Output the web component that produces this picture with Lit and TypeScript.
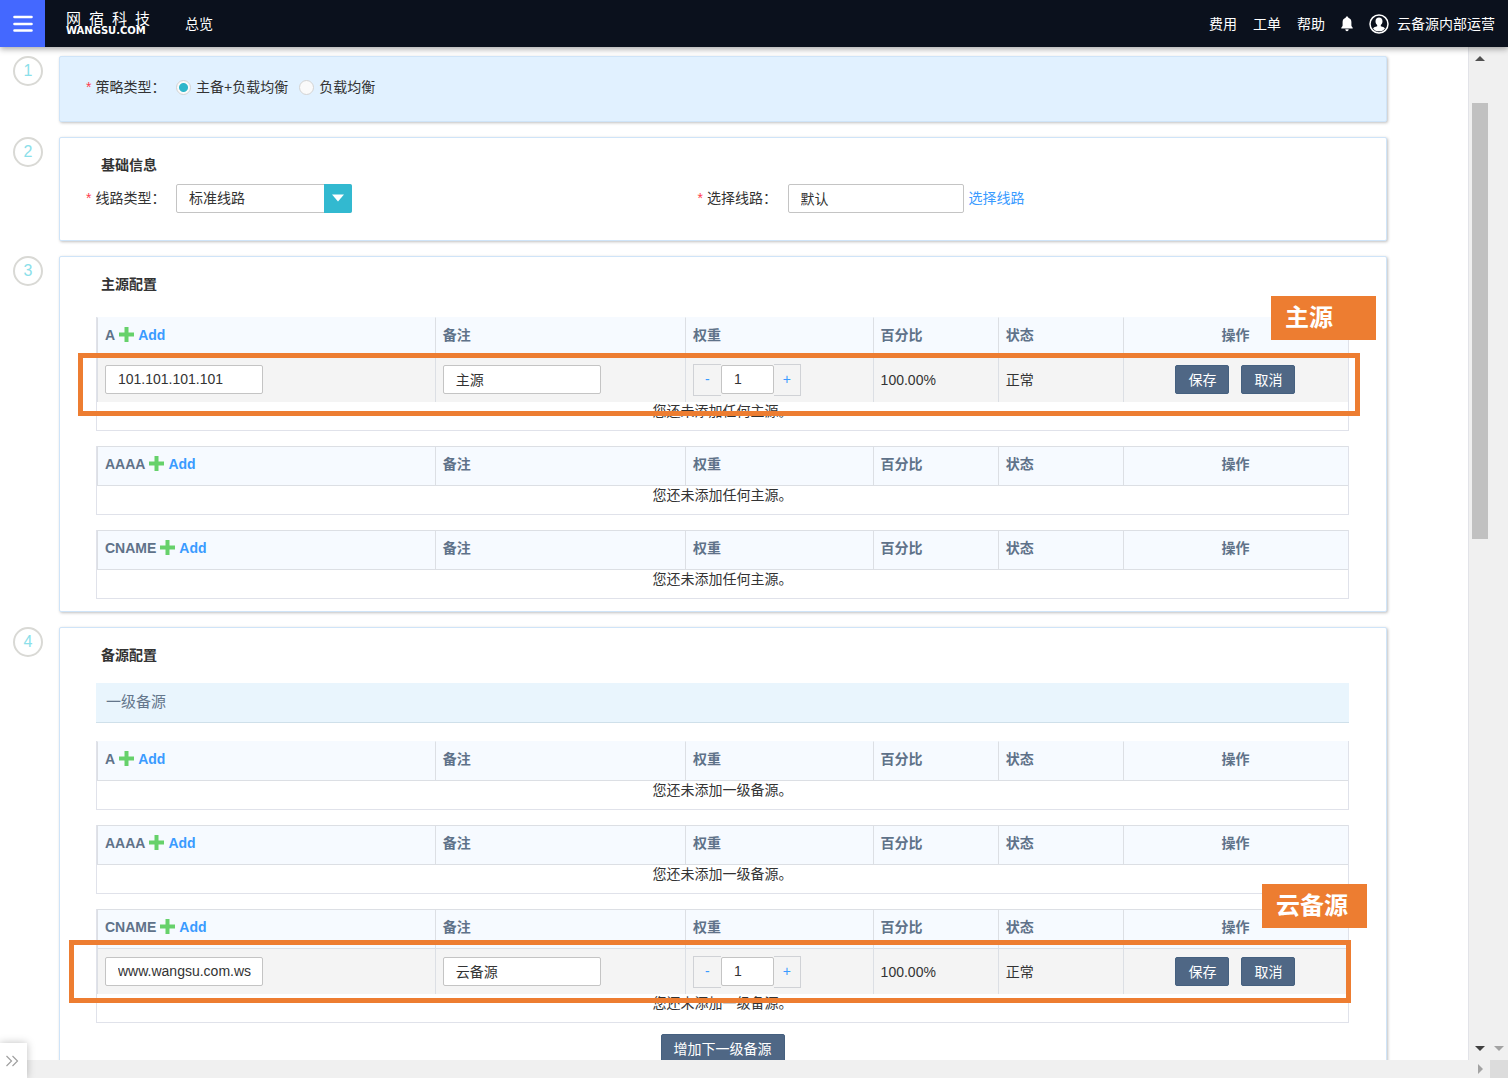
import { LitElement, html, css, svg, nothing } from "lit";
import { customElement, property } from "lit/decorators.js";
import { classMap } from "lit/directives/class-map.js";

interface Source {
  address: string;
  remark: string;
  weight: number;
  percent: string;
  status: string;
}

const controls = css`
  *,
  *::before,
  *::after {
    box-sizing: border-box;
  }
  button,
  input,
  select {
    font: inherit;
    color: inherit;
    margin: 0;
  }
  button {
    cursor: pointer;
  }
  .text-input {
    height: 29px;
    padding: 0 11px 1px 12px;
    border: 1px solid #c4c4c4;
    border-radius: 2px;
    background: #fff;
    color: #333;
    outline: none;
  }
  .solid-button {
    height: 29px;
    padding: 0 12px;
    border: 1px solid #45607f;
    border-radius: 2px;
    background: #4f6785;
    color: #fff;
    line-height: 20px;
  }
`;

@customElement("source-table")
export class SourceTable extends LitElement {
  @property() kind = "";
  @property() empty = "";
  @property({ attribute: false }) source?: Source;
  @property({ type: Boolean }) open = false;

  static styles = [
    controls,
    css`
      :host {
        display: block;
      }
      .table {
        width: 100%;
        table-layout: fixed;
        border-collapse: separate;
        border-spacing: 0;
        border: 1px solid #e0e2ea;
        border-top: 0;
      }
      th,
      td {
        padding: 0 8px 0 7px;
        text-align: left;
        border-left: 1px solid #dcdfe4;
      }
      th {
        height: 40px;
        padding-bottom: 5px;
        background: #f6faff;
        border-top: 1px solid #dcdfe4;
        border-bottom: 1px solid #dcdfe4;
        color: #5f7289;
        font-weight: 600;
      }
      .open th {
        border-top-color: #f6faff;
      }
      .w27 {
        width: 27%;
      }
      .w20 {
        width: 20%;
      }
      .w15 {
        width: 15%;
      }
      .w10 {
        width: 10%;
      }
      .w18 {
        width: 18%;
      }
      .actions {
        text-align: center;
      }
      .kind {
        display: flex;
        align-items: center;
        gap: 4px;
      }
      .add {
        display: flex;
        align-items: center;
        gap: 4px;
        padding: 0;
        border: 0;
        background: none;
        color: #3a9bff;
        font-weight: 700;
      }
      .edit td {
        height: 45px;
        background: #f4f4f4;
      }
      .field {
        display: block;
        width: 158px;
        max-width: 100%;
      }
      .stepper {
        display: flex;
        align-items: center;
      }
      .step {
        width: 28px;
        height: 32px;
        padding: 0 0 2px;
        border: 1px solid #d0d2d6;
        background: #f4f4f4;
        color: #3a9bff;
      }
      .minus {
        border-right: 0;
      }
      .plus {
        width: 27px;
        border-left: 0;
      }
      .weight {
        width: 53px;
      }
      .buttons {
        display: flex;
        justify-content: center;
        gap: 12px;
      }
      .empty td {
        height: 28px;
        padding: 0;
        border-left: 0;
        text-align: center;
        vertical-align: top;
        line-height: 19px;
      }
    `,
  ];

  private editRow(s: Source) {
    return html`<tr class="edit">
      <td>
        <input class="text-input field" aria-label="${this.kind}" .value=${s.address} />
      </td>
      <td><input class="text-input field" aria-label="备注" .value=${s.remark} /></td>
      <td>
        <div class="stepper">
          <button class="step minus">-</button>
          <input class="text-input weight" aria-label="权重" .value=${String(s.weight)} />
          <button class="step plus">+</button>
        </div>
      </td>
      <td>${s.percent}</td>
      <td>${s.status}</td>
      <td>
        <div class="buttons">
          <button class="solid-button">保存</button>
          <button class="solid-button">取消</button>
        </div>
      </td>
    </tr>`;
  }

  render() {
    return html`<table class=${classMap({ table: true, open: this.open })}>
      <thead>
        <tr>
          <th class="w27">
            <div class="kind">
              <span>${this.kind}</span>
              <button class="add">
                <svg width="15" height="15" viewBox="0 0 15 15" aria-hidden="true">
                  <path d="M5.500 0h4v5.500H15v4H9.500V15h-4V9.500H0v-4h5.500z" fill="#66d16b" />
                </svg>
                Add
              </button>
            </div>
          </th>
          <th class="w20">备注</th>
          <th class="w15">权重</th>
          <th class="w10">百分比</th>
          <th class="w10">状态</th>
          <th class="w18 actions">操作</th>
        </tr>
      </thead>
      <tbody>
        ${this.source ? this.editRow(this.source) : nothing}
        <tr class="empty">
          <td colspan="6">${this.empty}</td>
        </tr>
      </tbody>
    </table>`;
  }
}

const MAIN_SOURCE: Source = {
  address: "101.101.101.101",
  remark: "主源",
  weight: 1,
  percent: "100.00%",
  status: "正常",
};

const BACKUP_SOURCE: Source = {
  address: "www.wangsu.com.wscdns.com",
  remark: "云备源",
  weight: 1,
  percent: "100.00%",
  status: "正常",
};

const triangle = (points: string, fill: string) =>
  html`<svg class="tri" width="10" height="10" viewBox="0 0 10 10" aria-hidden="true">
    ${svg`<polygon points=${points} fill=${fill} />`}
  </svg>`;

@customElement("app-root")
export class AppRoot extends LitElement {
  static styles = [
    controls,
    css`
      :host {
        display: flex;
        flex-direction: column;
        height: 100vh;
        overflow: hidden;
        position: relative;
        background: #fff;
        color: #333;
        font: 14px/20px "Liberation Sans", "Noto Sans CJK SC", sans-serif;
      }

      .topbar {
        flex: none;
        display: flex;
        align-items: center;
        height: 47px;
        padding-right: 13px;
        background: #0b111d;
        color: #fff;
        box-shadow: 0 2px 6px rgba(0, 0, 0, 0.35);
        z-index: 2;
      }
      .menu {
        display: grid;
        place-items: center;
        width: 45px;
        height: 47px;
        padding: 0;
        border: 0;
        background: #4468ff;
      }
      .logo {
        display: flex;
        flex-direction: column;
        width: 84px;
        margin-left: 21px;
        color: #fff;
        text-decoration: none;
      }
      .logo-cn {
        display: flex;
        justify-content: space-between;
        font-size: 15px;
        line-height: 14px;
      }
      .logo-en {
        font: 700 10px/9px "DejaVu Sans", sans-serif;
      }
      .nav-link {
        color: #fff;
        text-decoration: none;
      }
      .overview {
        margin-left: 35px;
      }
      .right {
        display: flex;
        align-items: center;
        gap: 16px;
        margin-left: auto;
      }
      .user {
        display: flex;
        align-items: center;
        gap: 8px;
      }

      .body {
        flex: 1;
        min-height: 0;
        display: flex;
      }
      .content {
        flex: 1;
        min-width: 0;
        overflow: hidden;
        padding: 9px 81px 0 13px;
        border-right: 1px solid #e2e3e8;
      }
      .steps {
        display: flex;
        flex-direction: column;
        gap: 15px;
        margin: 0;
        padding: 0;
        list-style: none;
      }
      .step {
        display: flex;
        align-items: flex-start;
        gap: 16px;
      }
      .number {
        flex: none;
        width: 30px;
        height: 30px;
        border: 2px solid #d9d9d5;
        border-radius: 50%;
        color: #8be0ea;
        font-size: 16px;
        line-height: 26px;
        text-align: center;
      }
      .card {
        flex: 1;
        min-width: 0;
        padding: 17px 37px 12px 36px;
        border: 1px solid #cfe4f8;
        border-radius: 2px;
        background: #fff;
        box-shadow: 1px 1px 3px rgba(0, 0, 0, 0.25);
      }
      .strategy {
        padding: 16px 78px 20px 26px;
        background: #e1f1ff;
      }
      .basic {
        padding: 17px 77px 28px 26px;
      }
      .title {
        margin: 0 0 0 5px;
        font-size: 14px;
        line-height: 20px;
        font-weight: 600;
        color: #333;
      }
      .basic .title {
        margin: 0 0 9px 15px;
      }
      .form {
        display: grid;
        grid-template-columns: 1fr 1fr;
      }
      .field {
        display: flex;
        align-items: center;
        height: 28px;
        margin: 0;
        padding: 0;
        border: 0;
      }
      .label {
        flex: none;
        width: 90px;
      }
      .star {
        margin-right: 4px;
        color: #ff3b4e;
      }
      .radio {
        display: flex;
        align-items: center;
        gap: 5px;
        margin-right: 11px;
      }
      .radio-input {
        appearance: none;
        width: 15px;
        height: 15px;
        border: 1px solid #d3d3d3;
        border-radius: 50%;
        background: #fafafa;
      }
      .radio-input:checked {
        background: radial-gradient(circle, #2fb6ca 0 4px, #fafafa 5px);
      }
      .select {
        display: grid;
        width: 176px;
      }
      .select-input {
        grid-area: 1 / 1;
        appearance: none;
        height: 29px;
        padding: 0 40px 1px 12px;
        border: 1px solid #c4c4c4;
        border-radius: 2px;
        background: #fff;
        color: #333;
      }
      .select-arrow {
        grid-area: 1 / 1;
        justify-self: end;
        display: grid;
        place-items: center;
        width: 28px;
        height: 29px;
        border-radius: 0 2px 2px 0;
        background: #32b9d0;
        pointer-events: none;
      }
      .line-input {
        width: 176px;
      }
      .link {
        margin-left: 5px;
        color: #3a9bff;
        text-decoration: none;
      }

      .tables {
        display: flex;
        flex-direction: column;
        gap: 15px;
        margin-top: 23px;
      }
      .backup {
        margin-top: 18px;
      }
      .level {
        height: 40px;
        margin: 18px 0 0;
        padding: 0 10px;
        border-bottom: 1px solid #cfe0ea;
        background: #e9f5fd;
        color: #64768b;
        font-size: 15px;
        line-height: 38px;
        font-weight: 400;
      }
      .more {
        display: flex;
        justify-content: center;
        margin-top: 11px;
      }

      .group {
        position: relative;
      }
      .mark {
        position: absolute;
        height: 63px;
        border: 5px solid #ed7d31;
        pointer-events: none;
      }
      .tag {
        position: absolute;
        width: 105px;
        height: 44px;
        padding-left: 14px;
        background: #ed7d31;
        color: #fff;
        font-size: 24px;
        font-weight: 700;
        line-height: 44px;
      }
      .mark-main {
        top: 36px;
        left: -18px;
        right: -11px;
      }
      .tag-main {
        top: -21px;
        right: -27px;
      }
      .mark-backup {
        top: 31px;
        left: -27px;
        right: -2px;
      }
      .tag-backup {
        top: -25px;
        right: -18px;
      }

      .rails {
        flex: none;
        display: flex;
        background: #f0f0f0;
      }
      .rail {
        display: grid;
        grid-template-rows: 22px 34px 43% 1fr 22px;
        justify-items: center;
        align-items: center;
        width: 21px;
      }
      .rail-outer {
        width: 18px;
      }
      .thumb {
        grid-row: 3;
        align-self: stretch;
        width: 16px;
        background: #c1c1c1;
      }
      .down {
        grid-row: 5;
      }
      .tri {
        display: block;
      }
      .hbar {
        flex: none;
        display: flex;
        justify-content: flex-end;
        align-items: center;
        gap: 5px;
        height: 18px;
        background: #f0f0f0;
      }
      .corner {
        width: 18px;
        height: 18px;
        background: #dcdcdc;
      }
      .expand {
        position: absolute;
        left: 0;
        bottom: 0;
        display: grid;
        place-items: center;
        width: 27px;
        height: 35px;
        padding: 0 4px 0 0;
        border: 0;
        background: #fff;
        box-shadow: 0 0 8px rgba(0, 0, 0, 0.25);
      }
    `,
  ];

  private topbar() {
    return html`<header class="topbar">
      <button class="menu" aria-label="菜单">
        <svg width="20" height="18" viewBox="0 0 20 18" aria-hidden="true">
          <path d="M1.500 2h17M1.500 9h17M1.500 15.500h17" stroke="#fff" stroke-width="2.600" stroke-linecap="round" />
        </svg>
      </button>
      <a class="logo" href="#">
        <span class="logo-cn"><span>网</span><span>宿</span><span>科</span><span>技</span></span>
        <span class="logo-en">WANGSU.COM</span>
      </a>
      <a class="nav-link overview" href="#">总览</a>
      <nav class="right">
        <a class="nav-link" href="#">费用</a>
        <a class="nav-link" href="#">工单</a>
        <a class="nav-link" href="#">帮助</a>
        <svg width="12" height="16" viewBox="0 0 12 16" aria-hidden="true">
          <path
            d="M6 0.500c.8 0 1.300.5 1.300 1.300C9.300 2.400 10.400 4 10.400 6v3.600c0 .8.600 1.300 1.300 2.100v.8H.3v-.8c.7-.8 1.300-1.300 1.300-2.100V6c0-2 1.100-3.600 3.100-4.200C4.700 1 5.200.5 6 .5zM4.300 13.300h3.400c-.1 1.200-.8 1.900-1.700 1.900s-1.600-.7-1.700-1.900z"
            fill="#fff"
          />
        </svg>
        <a class="nav-link user" href="#">
          <svg width="20" height="20" viewBox="0 0 20 20" aria-hidden="true">
            <circle cx="10" cy="10" r="9" fill="none" stroke="#fff" stroke-width="1.500" />
            <path
              d="M10 3.600c2.200 0 3.500 1.500 3.500 3.600 0 1.600-.7 3-1.700 3.800v1.200c2 .5 3.500 1.100 4.200 2.200-1.400 1.900-3.500 2.900-6 2.900s-4.600-1-6-2.900c.7-1.100 2.200-1.700 4.200-2.200V11c-1-.8-1.700-2.200-1.700-3.800 0-2.100 1.300-3.600 3.500-3.600z"
              fill="#fff"
            />
          </svg>
          <span>云备源内部运营</span>
        </a>
      </nav>
    </header>`;
  }

  private steps() {
    const noMain = "您还未添加任何主源。";
    const noBackup = "您还未添加一级备源。";
    return html`<ol class="steps">
      <li class="step">
        <span class="number">1</span>
        <section class="card strategy">
          <div class="field" role="radiogroup" aria-labelledby="strategy">
            <span class="label" id="strategy"><span class="star">*</span>策略类型：</span>
            <label class="radio">
              <input class="radio-input" type="radio" name="strategy" checked />主备+负载均衡
            </label>
            <label class="radio">
              <input class="radio-input" type="radio" name="strategy" />负载均衡
            </label>
          </div>
        </section>
      </li>
      <li class="step">
        <span class="number">2</span>
        <section class="card basic">
          <h2 class="title">基础信息</h2>
          <div class="form">
            <div class="field">
              <label class="label" for="line-type"><span class="star">*</span>线路类型：</label>
              <div class="select">
                <select class="select-input" id="line-type">
                  <option>标准线路</option>
                </select>
                <span class="select-arrow">
                  <svg width="12" height="8" viewBox="0 0 12 8" aria-hidden="true">
                    <path d="M0 0.500h12L6 7.500z" fill="#fff" />
                  </svg>
                </span>
              </div>
            </div>
            <div class="field">
              <label class="label" for="line"><span class="star">*</span>选择线路：</label>
              <input class="text-input line-input" id="line" .value=${"默认"} />
              <a class="link" href="#">选择线路</a>
            </div>
          </div>
        </section>
      </li>
      <li class="step">
        <span class="number">3</span>
        <section class="card">
          <h2 class="title">主源配置</h2>
          <div class="tables">
            <div class="group">
              <source-table kind="A" open empty=${noMain} .source=${MAIN_SOURCE}></source-table>
              <div class="mark mark-main"></div>
              <div class="tag tag-main">主源</div>
            </div>
            <source-table kind="AAAA" empty=${noMain}></source-table>
            <source-table kind="CNAME" empty=${noMain}></source-table>
          </div>
        </section>
      </li>
      <li class="step">
        <span class="number">4</span>
        <section class="card">
          <h2 class="title">备源配置</h2>
          <h3 class="level">一级备源</h3>
          <div class="tables backup">
            <source-table kind="A" open empty=${noBackup}></source-table>
            <source-table kind="AAAA" empty=${noBackup}></source-table>
            <div class="group">
              <source-table kind="CNAME" empty=${noBackup} .source=${BACKUP_SOURCE}></source-table>
              <div class="mark mark-backup"></div>
              <div class="tag tag-backup">云备源</div>
            </div>
          </div>
          <div class="more"><button class="solid-button">增加下一级备源</button></div>
        </section>
      </li>
    </ol>`;
  }

  render() {
    return html`
      ${this.topbar()}
      <div class="body">
        <main class="content">${this.steps()}</main>
        <div class="rails">
          <div class="rail">
            ${triangle("5,3 10,8 0,8", "#505050")}
            <div class="thumb"></div>
            <div class="down">${triangle("0,2 10,2 5,7", "#404040")}</div>
          </div>
          <div class="rail rail-outer">
            <div class="down">${triangle("0,2 10,2 5,7", "#a3a3a3")}</div>
          </div>
        </div>
      </div>
      <div class="hbar">
        ${triangle("3,0 8,5 3,10", "#a3a3a3")}
        <div class="corner"></div>
      </div>
      <button class="expand" aria-label="展开">
        <svg width="14" height="12" viewBox="0 0 14 12" aria-hidden="true">
          <path d="M1.500 1l5 5-5 5M7.500 1l5 5-5 5" fill="none" stroke="#a0a0a0" stroke-width="1.200" />
        </svg>
      </button>
    `;
  }
}
